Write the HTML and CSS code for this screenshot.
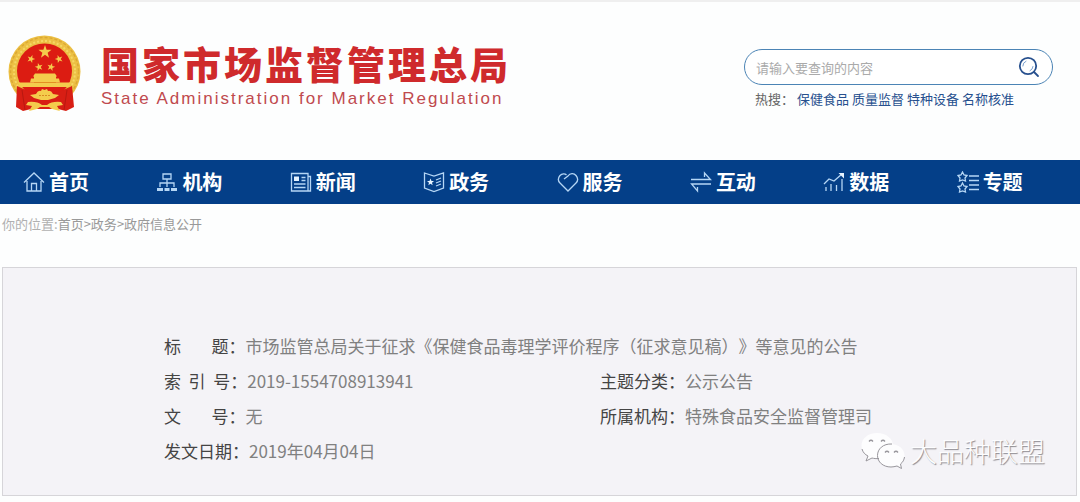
FILE: index.html
```html
<!DOCTYPE html>
<html lang="zh-CN">
<head>
    <meta charset="UTF-8">
    <meta name="viewport" content="width=device-width, initial-scale=1.0">
    <title>国家市场监督管理总局</title>
    <link rel="stylesheet" href="styles.css">
</head>
<body>

<!-- Header -->
<header class="header">
    <div class="brand">
        <svg class="emblem" viewBox="0 0 73 77" aria-hidden="true">
            <defs>
                <path id="star" d="M0-6 1.4-1.9 5.7-1.9 2.3.7 3.5 4.9 0 2.4-3.5 4.9-2.3.7-5.7-1.9-1.4-1.9z"/>
            </defs>
            <circle cx="36.5" cy="36.5" r="36" fill="#ecc044"/>
            <circle cx="36.5" cy="36.5" r="34" fill="none" stroke="#dca834" stroke-width="1.5" stroke-dasharray="3 2"/>
            <circle cx="36.5" cy="36.5" r="30.5" fill="none" stroke="#f6d765" stroke-width="2" stroke-dasharray="2 2"/>
            <circle cx="36.5" cy="36" r="27.500" fill="#dc1c12"/>
            <path d="M9 51 20 56 30 60H43L53 56 64 51 66 72 58 76 50 74H23L15 76 8 72z" fill="#d81e14"/>
            <g fill="#f4cc4c">
                <use href="#star" transform="translate(37 17) scale(1.15)"/>
                <use href="#star" transform="translate(23 24) rotate(20) scale(.7)"/>
                <use href="#star" transform="translate(31 32) rotate(-15) scale(.7)"/>
                <use href="#star" transform="translate(43 32) rotate(15) scale(.7)"/>
                <use href="#star" transform="translate(51 24) rotate(-20) scale(.7)"/>
                <path d="M27 38.500H47L49 41.500H25zM26 41.500H48V43.500H26zM23 43.500H51L52 47.500H22z"/>
                <path d="M10 47.500H63L61 52H12z"/>
                <path d="M28 59Q30 55 33 56L34 54 36.500 55 39 54 40 56Q43 55 45 59L51 60 47 63 40 65H33L26 63 22 60z"/>
                <path d="M20 67Q29 66 34 70H39Q44 66 53 67L55 70 49 71 52 76 44 74 41 72H32L29 74 21 76 24 71 18 70z"/>
            </g>
            <path d="M26 47.500H48" stroke="#e08a1c" stroke-width=".8"/>
            <path d="M31 60.500H42" stroke="#d98b22" stroke-width="1" stroke-dasharray="2 1"/>
            <path d="M14 55 17 75M59 55 56 75" stroke="#b81810" stroke-width="1"/>
        </svg>
        <div class="brand-text">
            <h1>国家市场监督管理总局</h1>
            <p>State Administration for Market Regulation</p>
        </div>
    </div>

    <div class="search">
        <form class="search-box">
            <input type="text" placeholder="请输入要查询的内容" aria-label="搜索">
            <button type="submit" aria-label="查询">
                <svg viewBox="0 0 22 22" fill="none" stroke="#27508e" stroke-width="1.800" stroke-linecap="round">
                    <circle cx="10" cy="10" r="8.200"/>
                    <path d="M16 16 20 20"/>
                    <path d="M4.800 10A5.200 5.200 0 0 1 8 5.200M15 10.500A5.200 5.200 0 0 1 12 14.800" stroke="#7da3d0" stroke-width="1"/>
                </svg>
            </button>
        </form>
        <div class="hot">
            <span>热搜：</span>
            <a href="#">保健食品</a>
            <a href="#">质量监督</a>
            <a href="#">特种设备</a>
            <a href="#">名称核准</a>
        </div>
    </div>
</header>

<!-- Navbar -->
<nav class="navbar">
    <a href="#">
        <svg viewBox="0 0 22 22"><path d="M1 11.500 11 2 21 11.500M4 10V20H18V10M8.500 20V12.500H13.500V20"/></svg>
        首页
    </a>
    <a href="#">
        <svg viewBox="0 0 22 22"><path d="M7 3H15V8H7zM11 8V12M4 16V12H18V16M11 12V16"/><path d="M1 18.500H7M8.500 18.500H13.500M15 18.500H21" stroke-width="3"/></svg>
        机构
    </a>
    <a href="#">
        <svg viewBox="0 0 22 22"><path d="M1.500 2.500H18V20H1.500zM18 5.500H20.500V20H18M11.500 6.500H15.500M11.500 9.500H15.500M4 13H15.500M4 16.500H15.500"/><path class="solid" d="M4 5.500H9V10H4z"/></svg>
        新闻
    </a>
    <a href="#">
        <svg viewBox="0 0 22 22"><path d="M1.500 2 11 5 20.500 2V17L11 20.500 1.500 17zM13 9 18 7M13 12 18 10M13 15 18 13"/><path class="solid" d="M7.500 7.500 8.500 10 11 10 9 11.700 9.700 14.300 7.500 12.800 5.300 14.300 6 11.700 4 10 6.500 10z"/></svg>
        政务
    </a>
    <a href="#">
        <svg viewBox="0 0 22 22"><path d="M7 8 11 5C13 2 17 2 19 4.500 21 7 21 10 19 12L11 20 3 12C1 10 1 7 3 4.500 5 2.500 8 2.500 9.500 4"/></svg>
        服务
    </a>
    <a href="#">
        <svg viewBox="0 0 22 22"><path d="M1 8.500H20.500L14.500 2V6M21 13H1.500L7.500 20V16"/></svg>
        互动
    </a>
    <a href="#">
        <svg viewBox="0 0 22 22"><path d="M1 13 6 8 11 10 19 3M3 20V16M8 20V13M13.500 20V14M19 20V8"/><path class="solid" d="M15.500 2H21V7.500z"/></svg>
        数据
    </a>
    <a href="#">
        <svg viewBox="0 0 22 22"><path d="M5.500 1 7 4 10 4.500 8 7 8.500 10 5.500 9 2.500 10 3 7 1 4.500 4 4zM5.500 12 7 15 10 15.500 8 18 8.500 21 5.500 20 2.500 21 3 18 1 15.500 4 15zM12 5H22M12 9.500H22M12 14H22M12 18.500H22"/></svg>
        专题
    </a>
</nav>

<!-- Breadcrumb -->
<div class="breadcrumb">
    <span>你的位置:</span><a href="#">首页</a>&gt;<a href="#">政务</a>&gt;<a href="#">政府信息公开</a>
</div>

<!-- Document info -->
<main class="info">
    <dl class="info-grid">
        <div class="wide"><dt>标&nbsp;&nbsp;&nbsp;&nbsp;&nbsp;&nbsp;&nbsp;&nbsp;题：</dt><dd>市场监管总局关于征求《保健食品毒理学评价程序（征求意见稿）》等意见的公告</dd></div>
        <div><dt>索&nbsp;&nbsp;引&nbsp;&nbsp;号：</dt><dd>2019-1554708913941</dd></div>
        <div><dt>主题分类：</dt><dd>公示公告</dd></div>
        <div><dt>文&nbsp;&nbsp;&nbsp;&nbsp;&nbsp;&nbsp;&nbsp;&nbsp;号：</dt><dd>无</dd></div>
        <div><dt>所属机构：</dt><dd>特殊食品安全监督管理司</dd></div>
        <div><dt>发文日期：</dt><dd>2019年04月04日</dd></div>
    </dl>

    <div class="watermark">
        <svg viewBox="0 0 46 40" aria-hidden="true">
            <g fill="#fdfdfe">
                <path d="M17 2C8 2 1.500 7.500 1.500 14.500 1.500 19 4 22.500 8 25L6 30 12 27C14 27.500 16 27.800 19 27.500 25 27 33 22 33 14.500 33 7.500 26 2 17 2z"/>
                <path d="M31 13C23 13 17.500 18 17.500 24.500 17.500 31 23 36 31 36 33 36 35 35.500 37 35L41.500 37.500 40.500 33C43 31 44.500 28 44.500 24.500 44.500 18 38.500 13 31 13z"/>
            </g>
            <path d="M2 18C3 21.500 5 23.500 8 25L6 30 12 27C14 27.500 16 27.800 19 27.500M32 13C23 12.500 17.500 18 17.500 24.500 17.500 31 23 36 31 36 33 36 35 35.500 37 35L41.500 37.500 40.500 33C43 31 44 29 44.500 26" fill="none" stroke="#98969c" stroke-width="1"/>
            <path d="M9 10.500Q11 8 13 10.500M21 10.500Q23 8 25 10.500M25 21.500Q27 19 29 21.500M34 21.500Q36 19 38 21.500" fill="none" stroke="#98969c" stroke-width="1.300"/>
        </svg>
        大品种联盟
    </div>
</main>

</body>
</html>
```
FILE: styles.css
```css
* {
    box-sizing: border-box;
}

body {
    margin: 0;
    border-top: 2px solid #efefef;
    background: #fdfefe;
    font-family: "Noto Sans CJK SC", sans-serif;
    color: #444;
}

a {
    color: inherit;
    text-decoration: none;
}

.header {
    display: flex;
    justify-content: space-between;
    align-items: flex-start;
    padding: 33px 27px 48px 8px;
}

.brand {
    display: flex;
    gap: 20px;
}

.emblem {
    width: 73px;
    height: 77px;
}

.brand-text h1 {
    margin: 6px 0 0;
    font-size: 38px;
    font-weight: 900;
    line-height: 44px;
    letter-spacing: 3px;
    color: #cf2a2c;
}

.brand-text p {
    margin: 4px 0 0;
    font-family: "Liberation Sans", sans-serif;
    font-size: 17px;
    line-height: 20px;
    letter-spacing: 2px;
    color: #c04a4e;
}

.search {
    width: 309px;
    margin-top: 14px;
}

.search-box {
    display: flex;
    align-items: center;
    height: 36px;
    padding: 0 12px 0 11px;
    border: 1px solid #4b84b5;
    border-radius: 18px;
    background: #fff;
}

.search-box input {
    flex: 1;
    min-width: 0;
    padding: 0;
    border: 0;
    outline: 0;
    background: none;
    font-family: inherit;
    font-size: 13px;
}

.search-box input::placeholder {
    color: #aaa;
}

.search-box button {
    width: 22px;
    height: 22px;
    padding: 0;
    border: 0;
    background: none;
}

.search-box svg {
    display: block;
}

.hot {
    display: flex;
    gap: 3px;
    padding-left: 11px;
    margin-top: 4px;
    font-size: 13px;
    line-height: 20px;
    color: #666;
}

.hot a {
    color: #27508e;
}

.navbar {
    display: grid;
    grid-template-columns: repeat(8, 1fr);
    padding-right: 13px;
    background: #043f88;
    color: #fff;
}

.navbar a {
    display: flex;
    align-items: center;
    gap: 4px;
    padding-left: 23px;
    font-size: 20px;
    font-weight: 700;
    line-height: 44px;
}

.navbar svg {
    width: 22px;
    height: 22px;
    fill: none;
    stroke: #b5d6f5;
    stroke-width: 1.3;
}

.navbar .solid {
    fill: #e6f3ff;
    stroke: none;
}

.breadcrumb {
    padding: 10px 2px;
    font-size: 13px;
    line-height: 20px;
    color: #999;
}

.breadcrumb span {
    color: #b0b0b0;
}

.info {
    position: relative;
    margin: 23px 3px 5px 2px;
    padding: 60px 40px 27px 161px;
    border: 1px solid #d6d5d9;
    background: #f4f3f7;
}

.info-grid {
    display: grid;
    grid-template-columns: 1fr 1fr;
    margin: 0;
    font-size: 17px;
    line-height: 35px;
    text-spacing-trim: space-all;
}

.info-grid div {
    display: flex;
}

.info-grid .wide {
    grid-column: 1 / -1;
}

.info-grid dt {
    color: #444;
}

.info-grid dd {
    margin: 0;
    color: #808080;
}

.watermark {
    position: absolute;
    right: 31px;
    bottom: 24px;
    display: flex;
    align-items: center;
    gap: 4px;
    font-size: 27px;
    font-weight: 300;
    line-height: 40px;
    color: #fdfdfe;
    text-shadow: 1px 1px 1px #8a888e;
}

.watermark svg {
    width: 46px;
    height: 40px;
}
```
